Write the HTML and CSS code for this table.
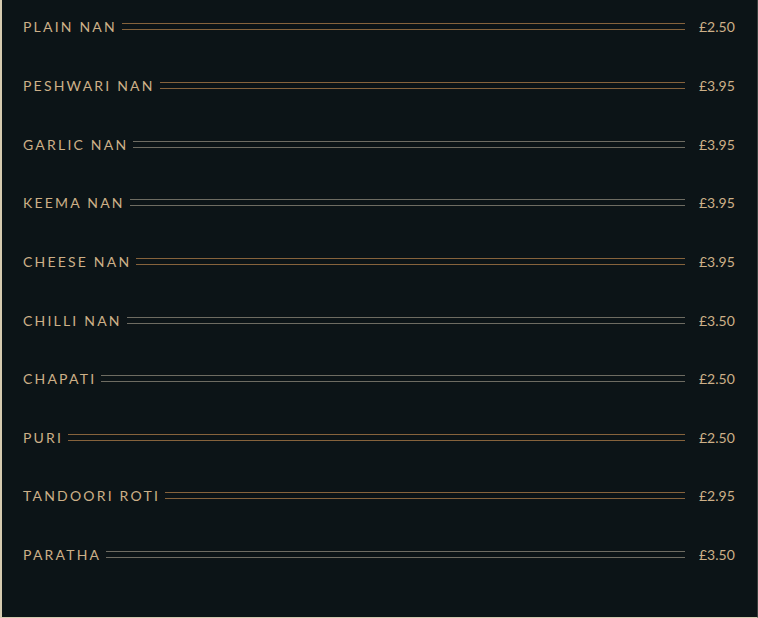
FILE: index.html
```html
<!DOCTYPE html>
<html>
<head>
<meta charset="utf-8">
<link rel="stylesheet" href="styles.css">
</head>
<body>
<div class="menu">
  <div class="row"><span class="name">PLAIN NAN</span><span class="rule brown"></span><span class="price">£2.50</span></div>
  <div class="row step"><span class="name">PESHWARI NAN</span><span class="rule brown"></span><span class="price">£3.95</span></div>
  <div class="row step"><span class="name">GARLIC NAN</span><span class="rule grey"></span><span class="price">£3.95</span></div>
  <div class="row"><span class="name">KEEMA NAN</span><span class="rule grey"></span><span class="price">£3.95</span></div>
  <div class="row step"><span class="name">CHEESE NAN</span><span class="rule brown"></span><span class="price">£3.95</span></div>
  <div class="row step"><span class="name">CHILLI NAN</span><span class="rule grey"></span><span class="price">£3.50</span></div>
  <div class="row"><span class="name">CHAPATI</span><span class="rule grey"></span><span class="price">£2.50</span></div>
  <div class="row step"><span class="name">PURI</span><span class="rule brown"></span><span class="price">£2.50</span></div>
  <div class="row"><span class="name">TANDOORI ROTI</span><span class="rule brown"></span><span class="price">£2.95</span></div>
  <div class="row step"><span class="name">PARATHA</span><span class="rule grey"></span><span class="price">£3.50</span></div>
</div>
</body>
</html>
```
FILE: styles.css
```css
html, body {
  margin: 0;
  padding: 0;
  background: #0c1417;
}
.menu {
  box-sizing: border-box;
  width: 758px;
  height: 618px;
  border-left: 2px solid #d6cbb0;
  border-bottom: 1px solid #d6cbb0;
  border-right: 1px solid #3a403e;
  padding: 14px 20px 0 21px;
  display: flex;
  flex-direction: column;
  gap: 34px;
}
.row {
  height: 24px;
  display: flex;
  align-items: center;
}
.row.step {
  margin-top: 1px;
}
.name {
  font-family: "Lato", "Liberation Sans", sans-serif;
  font-size: 14px;
  letter-spacing: 2.2px;
  color: #cdb088;
  white-space: nowrap;
}
.rule {
  flex: 1;
  height: 5px;
  margin-left: 5px;
  margin-right: 14px;
  margin-top: 1px;
  border-top: 1px solid #86633c;
  border-bottom: 1px solid #86633c;
}
.rule.grey {
  border-color: #6e6c62;
}
.price {
  font-family: "Lato", "Liberation Sans", sans-serif;
  font-size: 14px;
  color: #cdb088;
  width: 38px;
}
```
